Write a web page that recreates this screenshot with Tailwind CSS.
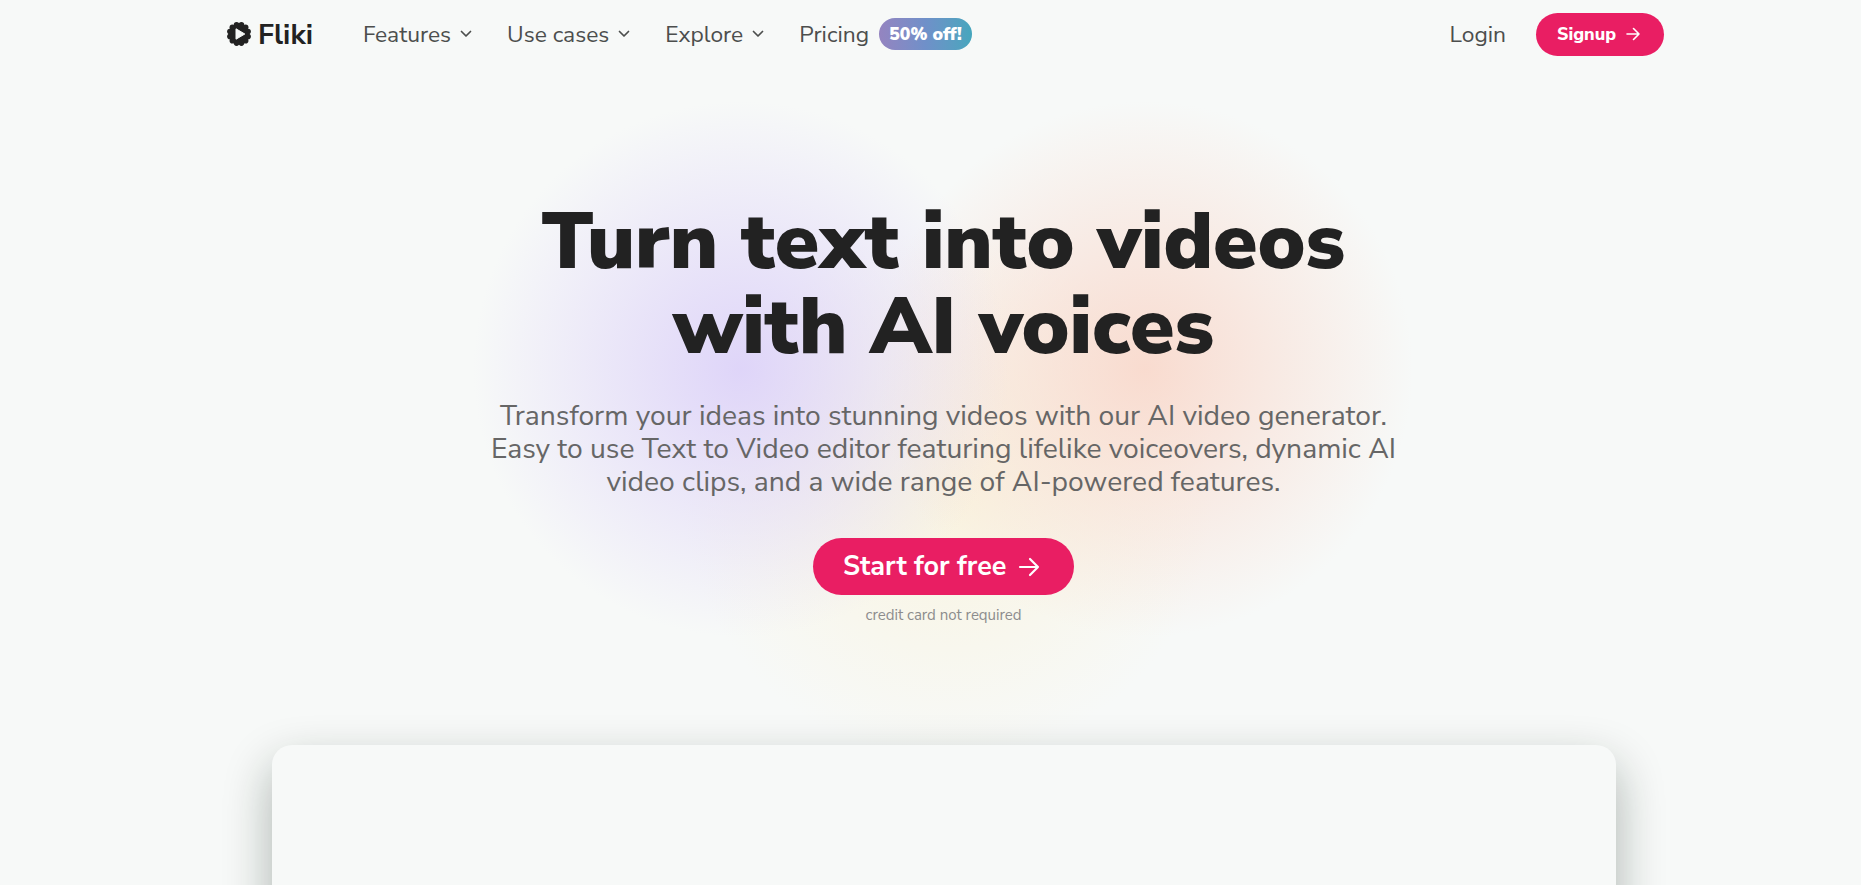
<!DOCTYPE html>
<html lang="en">
<head>
<meta charset="utf-8">
<title>Fliki</title>
<script src="https://cdn.jsdelivr.net/npm/@tailwindcss/browser@4"></script>
</head>
<body class="h-[885px] overflow-hidden bg-[#f7f9f8] font-['Nunito_Sans','Nunito',sans-serif] text-[#222]">
<div class="relative isolate flex h-[885px] flex-col items-center overflow-hidden">
  <!-- soft colour glows behind the hero -->
  <div class="absolute left-[683px] top-[230px] -z-10 h-[530px] w-[530px] rounded-full bg-[radial-gradient(closest-side,#faf3dacc,#f7f9f800)]"></div>
  <div class="absolute left-[877px] top-[101px] -z-10 h-[536px] w-[536px] rounded-full bg-[radial-gradient(closest-side,#f9d8cbe6,#f7f9f800)]"></div>
  <div class="absolute left-[473px] top-[101px] -z-10 h-[536px] w-[536px] rounded-full bg-[radial-gradient(closest-side,#dcd1f9e6,#f7f9f800)]"></div>

  <header class="ml-[15px] flex h-[68px] w-[1452px] shrink-0 items-center text-[22.8px] text-[#4c4e4d]">
    <a class="flex items-center text-[28.500px] font-bold leading-none text-[#222]">
      <svg class="mr-[6px] mb-px ml-[14px] size-[26px]" viewBox="-13 -13 26 26"><g id="logo" fill="#222"><circle r="10.6"/></g><path d="M-3-5.2 5.8 0-3 5.2Z" fill="#f7f9f8" stroke="#f7f9f8" stroke-linejoin="round"/></svg><span class="pt-[2px]">Fliki</span></a>
    <nav class="ml-[50px] flex items-center gap-[35px]">
      <a class="flex items-center gap-[9px]"><span class="pt-[2px]">Features</span> <svg class="size-3" viewBox="0 0 12 12" fill="none" stroke="currentColor" stroke-width="1.7" stroke-linecap="round" stroke-linejoin="round"><path d="m1.5 3.5 4.500 4.500 4.500-4.500"/></svg></a>
      <a class="flex items-center gap-[9px]"><span class="pt-[2px]">Use cases</span> <svg class="size-3" viewBox="0 0 12 12" fill="none" stroke="currentColor" stroke-width="1.7" stroke-linecap="round" stroke-linejoin="round"><path d="m1.5 3.5 4.500 4.500 4.500-4.500"/></svg></a>
      <a class="flex items-center gap-[9px]"><span class="pt-[2px]">Explore</span> <svg class="size-3" viewBox="0 0 12 12" fill="none" stroke="currentColor" stroke-width="1.7" stroke-linecap="round" stroke-linejoin="round"><path d="m1.5 3.5 4.500 4.500 4.500-4.500"/></svg></a>
      <a class="flex items-center gap-[10px]"><span class="pt-[2px]">Pricing</span> <span class="flex h-8 w-[93px] items-center justify-center rounded-full bg-linear-to-r from-[#9484c0] via-[#6f90c9] to-[#45a6bd] text-[17.6px] font-black text-white">50% off!</span></a>
    </nav>
    <a class="ml-auto pt-[2px]">Login</a>
    <a class="ml-[30px] flex h-[43px] w-[128px] items-center rounded-full bg-[#e91e63] pl-[21px] text-[17.8px] font-extrabold text-white">Signup <svg class="ml-[9px] size-4" viewBox="0 0 16 16" fill="none" stroke="currentColor" stroke-width="1.6" stroke-linecap="round" stroke-linejoin="round"><path d="M2 8h12M8.500 2.500 14 8l-5.500 5.500"/></svg></a>
  </header>

  <main class="ml-[26px] flex w-[920px] flex-col items-center pt-[131px] text-center">
    <h1 class="whitespace-nowrap text-[80px] font-black leading-[85px]">Turn text into videos<br>with AI voices</h1>
    <p class="mt-[30px] whitespace-nowrap text-[28.250px] leading-[33px] text-[#666]">Transform your ideas into stunning videos with our AI video generator.<br>Easy to use Text to Video editor featuring lifelike voiceovers, dynamic AI<br>video clips, and a wide range of AI-powered features.</p>
    <a class="mt-[40px] flex h-[57px] w-[261px] items-center rounded-full bg-[#e91e63] pl-[30px] text-[27px] font-bold text-white"><span class="pt-[2px]">Start for free</span> <svg class="ml-[12px] size-[22px]" viewBox="0 0 22 22" fill="none" stroke="currentColor" stroke-width="2.2" stroke-linecap="round" stroke-linejoin="round"><path d="M2 11h18M12 3l8 8-8 8"/></svg></a>
    <small class="mt-[9px] text-[15px] leading-[22px] text-[#8c8c8c]">credit card not required</small>
  </main>
  <section class="mt-[119px] ml-[26px] h-[760px] w-[1344px] shrink-0 rounded-[20px] bg-[#f7f9f8] shadow-[0_20px_48px_rgba(10,30,20,0.32)]"></section>
</div>
<script>
const g = document.getElementById('logo');
for (let i = 0; i < 12; i++) {
  const c = document.createElementNS('http://www.w3.org/2000/svg', 'circle');
  const a = (i + 0.5) * Math.PI / 6;
  c.setAttribute('cx', 9.4 * Math.cos(a)); c.setAttribute('cy', 9.4 * Math.sin(a)); c.setAttribute('r', 2.8);
  g.append(c);
}
</script>
</body>
</html>
